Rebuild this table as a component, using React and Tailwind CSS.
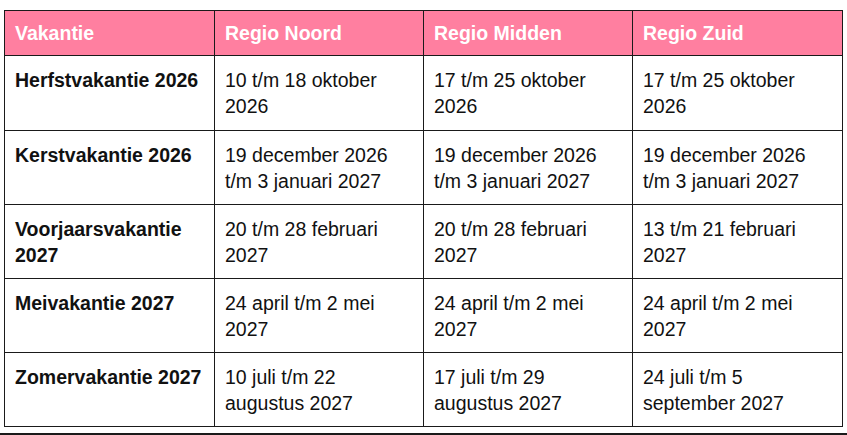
import React from "react";

const rows = [
  ["Herfstvakantie 2026", "10 t/m 18 oktober 2026", "17 t/m 25 oktober 2026", "17 t/m 25 oktober 2026"],
  ["Kerstvakantie 2026", "19 december 2026 t/m 3 januari 2027", "19 december 2026 t/m 3 januari 2027", "19 december 2026 t/m 3 januari 2027"],
  ["Voorjaarsvakantie 2027", "20 t/m 28 februari 2027", "20 t/m 28 februari 2027", "13 t/m 21 februari 2027"],
  ["Meivakantie 2027", "24 april t/m 2 mei 2027", "24 april t/m 2 mei 2027", "24 april t/m 2 mei 2027"],
  ["Zomervakantie 2027", "10 juli t/m 22 augustus 2027", "17 juli t/m 29 augustus 2027", "24 juli t/m 5 september 2027"],
];

const headers = ["Vakantie", "Regio Noord", "Regio Midden", "Regio Zuid"];

export default function App() {
  return (
    <div
      className="w-[847px] h-[435px] bg-white overflow-hidden text-[#111]"
      style={{ fontFamily: '"Liberation Sans", Arial, sans-serif' }}
    >
      <div className="pt-[10px] pl-[4px]">
        <table className="table-fixed border-collapse w-[838px] text-[19.5px] leading-[26px]">
          <colgroup>
            <col className="w-[210px]" />
            <col className="w-[209px]" />
            <col className="w-[209px]" />
            <col className="w-[210px]" />
          </colgroup>
          <thead>
            <tr className="bg-[#ff7fa0]">
              {headers.map((h) => (
                <th
                  key={h}
                  className="border border-[#1a1a1a] text-left align-top font-bold text-white pl-[10px] pr-[8px] pt-[9px] pb-[9px]"
                >
                  {h}
                </th>
              ))}
            </tr>
          </thead>
          <tbody>
            {rows.map((r, ri) => (
              <tr key={r[0]}>
                {r.map((c, i) => (
                  <td
                    key={i}
                    className={
                      "border border-[#1a1a1a] align-top text-left pl-[10px] pr-[8px] pt-[11px] " +
                      (ri === 0 ? "pb-[11px] " : "pb-[10px] ") +
                      (i === 0 ? "font-bold" : "font-normal")
                    }
                  >
                    {c}
                  </td>
                ))}
              </tr>
            ))}
          </tbody>
        </table>
      </div>
      <div className="mt-[6px] h-[2px] w-full bg-[#1a1a1a]" />
    </div>
  );
}
